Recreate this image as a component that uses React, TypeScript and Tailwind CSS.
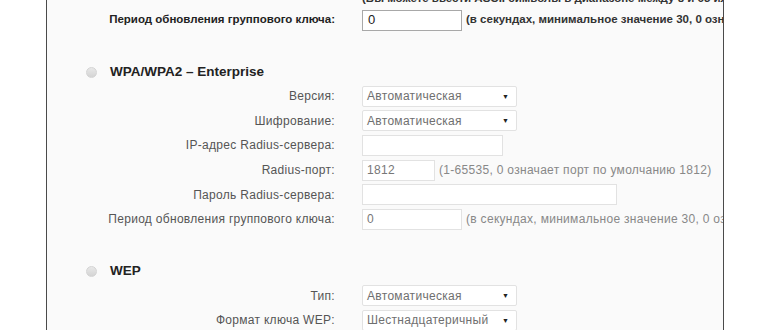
import React from 'react';

const font = { fontFamily: '"Liberation Sans", Arial, sans-serif' };

const Select: React.FC<{ value: string }> = ({ value }) => (
  <div className="w-[155px] h-[21px] shrink-0 bg-white border border-[#e2e2e2] rounded-[2px] flex items-center justify-between pl-[4px] pr-[7px]">
    <span className="text-[12px] text-[#6f6f6f] tracking-[0.3px]">{value}</span>
    <span className="text-[7px] text-[#222] leading-none">▼</span>
  </div>
);

const TextInput: React.FC<{ width: string; value?: string }> = ({ width, value }) => (
  <div className={`${width} h-[21px] shrink-0 bg-white border border-[#e2e2e2] flex items-center pl-[4px] text-[12px] text-[#777] tracking-[0.3px]`}>
    {value}
  </div>
);

const Row: React.FC<{ label: string; children: React.ReactNode }> = ({ label, children }) => (
  <div className="flex items-center h-[24.6px]">
    <div className="w-[288px] shrink-0 text-right text-[12px] text-[#555] tracking-[0.3px] whitespace-nowrap">{label}</div>
    <div className="ml-[27px] flex items-center whitespace-nowrap">{children}</div>
  </div>
);

const Radio: React.FC = () => (
  <span className="block w-[11px] h-[11px] rounded-full border border-[#d4d4d4] bg-gradient-to-b from-[#e8e8e8] to-[#d4d4d4]" />
);

const SectionHeader: React.FC<{ title: string; top: string }> = ({ title, top }) => (
  <div className={`flex items-center h-[24px] ${top}`}>
    <div className="ml-[39px] shrink-0"><Radio /></div>
    <span className="ml-[13px] text-[13.5px] font-bold text-[#222]">{title}</span>
  </div>
);

export default function App() {
  return (
    <div className="w-[770px] h-[330px] bg-white overflow-hidden" style={font}>
      <div className="ml-[46px] w-[678px] h-full bg-[#fafafa] border-l border-r border-[#4a4a4a] overflow-hidden">
        {/* clipped hint from the PSK field above */}
        <div className="-mt-[9px] h-[14px] leading-[14px] pl-[315px] text-[11.5px] font-bold text-[#333] whitespace-nowrap">
          (Вы можете ввести ASCII символы в диапазоне между 8 и 63 или 8 и 64 шестнадцатеричных символов)
        </div>

        <div className="flex items-center h-[30px]">
          <div className="w-[288px] shrink-0 text-right text-[11.5px] font-bold text-[#222] whitespace-nowrap">
            Период обновления группового ключа:
          </div>
          <div className="ml-[27px] flex items-center whitespace-nowrap">
            <div className="w-[100px] h-[21px] shrink-0 bg-white border border-[#a8a8a8] flex items-center pl-[5px] text-[13px] text-[#222]">0</div>
            <span className="ml-[4px] text-[11.5px] font-bold text-[#333]">
              (в секундах, минимальное значение 30, 0 означает отключение обновления)
            </span>
          </div>
        </div>

        <SectionHeader title="WPA/WPA2 – Enterprise" top="mt-[25px]" />
        <Row label="Версия:"><Select value="Автоматическая" /></Row>
        <Row label="Шифрование:"><Select value="Автоматическая" /></Row>
        <Row label="IP-адрес Radius-сервера:"><TextInput width="w-[141px]" /></Row>
        <Row label="Radius-порт:">
          <TextInput width="w-[73px]" value="1812" />
          <span className="ml-[4px] text-[12px] text-[#888] tracking-[0.3px]">(1-65535, 0 означает порт по умолчанию 1812)</span>
        </Row>
        <Row label="Пароль Radius-сервера:"><TextInput width="w-[255px]" /></Row>
        <Row label="Период обновления группового ключа:">
          <TextInput width="w-[100px]" value="0" />
          <span className="ml-[4px] text-[12px] text-[#888] tracking-[0.3px]">(в секундах, минимальное значение 30, 0 означает отключение обновления)</span>
        </Row>

        <SectionHeader title="WEP" top="mt-[28px]" />
        <Row label="Тип:"><Select value="Автоматическая" /></Row>
        <Row label="Формат ключа WEP:"><Select value="Шестнадцатеричный" /></Row>
      </div>
    </div>
  );
}
